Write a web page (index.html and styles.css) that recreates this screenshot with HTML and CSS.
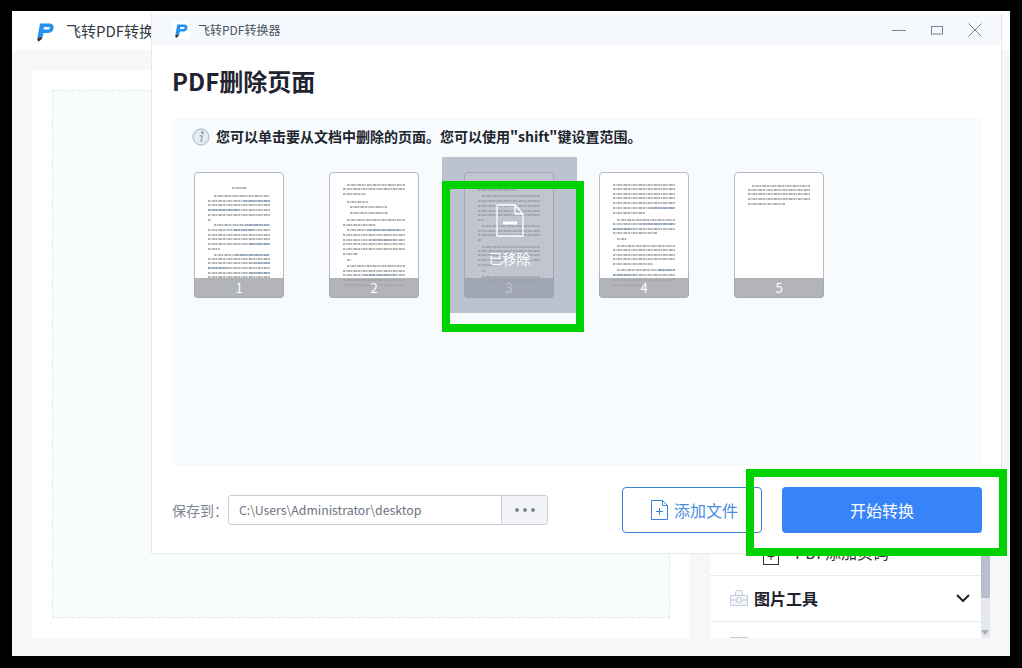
FILE: index.html
```html
<!DOCTYPE html>
<html lang="zh-CN">
<head>
<meta charset="utf-8">
<title>飞转PDF转换器</title>
<link rel="stylesheet" href="styles.css">
</head>
<body>
<svg class="defs" width="0" height="0" aria-hidden="true">
  <symbol id="logo" viewBox="0 0 24 24">
    <rect width="24" height="24" rx="2" fill="#fff"/>
    <path d="M7 4.500H16.500C20 4.500 21 7 20.500 9.500C20 12.500 17.500 14 14.500 14H10.500L9.500 18L4.500 18.500Z" fill="#2492f0"/>
    <path d="M11 8H15.500C16.500 8 17 8.600 16.800 9.300C16.600 10.200 15.900 10.500 15 10.500H10.400Z" fill="#fff"/>
    <path d="M4.500 18.500L9.500 18L8.800 20L5.500 22.800L4.500 21Z" fill="#33383f"/>
  </symbol>
</svg>

<section class="window app">
  <header class="app-bar">
    <svg class="app-logo"><use href="#logo"/></svg>
    <span class="app-name">飞转PDF转换器</span>
  </header>
  <div class="app-main">
    <div class="drop-panel"><div class="drop-zone"></div></div>
    <aside class="tools">
      <div class="tools-list">
        <div class="tools-spacer"></div>
        <div class="tool-row sub">
          <svg class="sub-icon" viewBox="0 0 24 20"><rect x="0" y="1" width="9" height="8" fill="#e39a3c"/><rect x="8.500" y="1.500" width="15" height="17" fill="#fff" stroke="#333"/><path d="M16 7v7M12.500 10.500h7" stroke="#333"/></svg>
          <span>PDF添加页码</span>
        </div>
        <div class="tool-row group">
          <svg class="group-icon" viewBox="0 0 18 16"><path d="M.5 5.500h17v10H.5zM.5 10h17M5.500 5.500V2.500a2 2 0 0 1 2-2h3a2 2 0 0 1 2 2v3" fill="#f1f5f9" stroke="#c2ccd8"/><rect x="7" y="8" width="4" height="4" fill="#fff" stroke="#c2ccd8"/></svg>
          <b class="group-name">图片工具</b>
          <svg class="chevron" viewBox="0 0 14 8"><path d="M1 1l6 6 6-6" fill="none" stroke="#222" stroke-width="2"/></svg>
        </div>
        <div class="tool-row group last">
          <svg class="group-icon" viewBox="0 0 18 16"><path d="M.5 1.500h17v14H.5z" fill="#f1f5f9" stroke="#c2ccd8"/></svg>
          <b class="group-name">文档翻译</b>
        </div>
      </div>
      <div class="scrollbar"><div class="scroll-thumb"></div><div class="scroll-arrow"></div></div>
    </aside>
  </div>
</section>

<section class="window modal">
  <header class="modal-bar">
    <div class="modal-brand">
      <svg class="modal-logo"><use href="#logo"/></svg>
      <span class="modal-name">飞转PDF转换器</span>
    </div>
    <div class="win-controls">
      <svg class="win-icon" viewBox="0 0 14 14"><path d="M0 7.500h14" stroke="#7d8594"/></svg>
      <svg class="win-icon" viewBox="0 0 14 14"><rect x="1.500" y="3.500" width="11" height="7.500" fill="none" stroke="#7d8594"/></svg>
      <svg class="win-icon" viewBox="0 0 14 14"><path d="M.5.500l13 13M13.500.500l-13 13" stroke="#7d8594"/></svg>
    </div>
  </header>
  <div class="modal-body">
    <h1 class="modal-title">PDF删除页面</h1>
    <div class="pages-panel">
      <p class="hint">
        <svg class="hint-icon" viewBox="0 0 18 18"><circle cx="9" cy="9" r="8" fill="#e4ebf3" stroke="#b8c5d6" stroke-width="1.300"/><path d="M9.800 3.800h1.200v1.600H9.800zM7.500 7.800h2.800L9 13.200h1.300" fill="none" stroke="#8d9fb6" stroke-width="1.200"/></svg>
        您可以单击要从文档中删除的页面。您可以使用"shift"键设置范围。
      </p>
      <div class="thumbs">
        <figure class="thumb">
          <svg class="page" viewBox="0 0 90 126">
            <path class="ink" d="M38 16h15M20 24h56M14 29h62M14 33h62M14 38h62M14 43h62M14 48h3M20 53h56M14 58h62M14 63h62M14 67h62M14 72h62M14 77h12M20 83h56M14 87h62M14 91h62M14 96h62M14 101h62M14 105h62"/>
            <path class="link" d="M50 29h26M52 53h24M40 58h20M14 38h30M56 72h20M42 83h34M60 91h16M14 96h20M56 101h20"/>
          </svg>
          <figcaption class="page-no">1</figcaption>
        </figure>
        <figure class="thumb">
          <svg class="page" viewBox="0 0 90 126">
            <path class="ink" d="M18 13h58M14 17h62M14 22h23M18 30h21M21 35h37M21 41h38M18 48h58M14 53h33M18 58h58M14 63h62M14 68h62M14 72h62M14 77h62M14 82h15M18 88h4M18 94h58M14 99h62M14 103h62M14 108h62M14 113h62"/>
            <path class="link" d="M40 58h30M44 68h22M36 103h30M14 108h40"/>
          </svg>
          <figcaption class="page-no">2</figcaption>
        </figure>
        <figure class="thumb removed">
          <svg class="page" viewBox="0 0 90 126">
            <path class="ink" d="M14 18h37M18 24h58M14 29h62M14 34h62M14 39h62M14 43h62M14 48h6M18 54h58M14 59h62M14 63h62M14 68h4M18 75h58M14 79h62M14 83h62M14 88h62M14 93h16M18 99h4M18 105h58M14 109h62"/>
          </svg>
          <figcaption class="page-no">3</figcaption>
          <div class="removed-mask">
            <svg class="removed-icon" viewBox="0 0 28 33"><path d="M1 1H19L27 10V32H1ZM19 1V10H27" fill="none" stroke="#fff" stroke-width="1.300"/><path d="M7 19H21" stroke="#fff" stroke-width="3"/></svg>
            <span class="removed-label">已移除</span>
          </div>
        </figure>
        <figure class="thumb">
          <svg class="page" viewBox="0 0 90 126">
            <path class="ink" d="M14 13h62M14 17h62M14 22h62M14 26h62M14 31h62M14 36h62M14 41h32M18 48h58M14 52h62M14 57h62M14 61h44M18 67h10M18 74h58M14 78h62M14 83h62M14 87h62M14 92h40M18 98h58M14 103h62M14 108h62M14 113h30"/>
            <path class="link" d="M52 36h24M44 52h30M14 57h20M14 103h22M60 98h16"/>
          </svg>
          <figcaption class="page-no">4</figcaption>
        </figure>
        <figure class="thumb">
          <svg class="page" viewBox="0 0 90 126">
            <path class="ink" d="M18 14h58M14 18h62M14 22h62M14 27h62M14 32h37"/>
          </svg>
          <figcaption class="page-no">5</figcaption>
        </figure>
      </div>
    </div>
    <footer class="modal-foot">
      <label class="save-label">保存到：</label>
      <div class="path-field">
        <span class="path-text">C:\Users\Administrator\desktop</span>
        <span class="path-more"><i></i><i></i><i></i></span>
      </div>
      <div class="foot-spacer"></div>
      <button class="btn-add">
        <svg class="add-icon" viewBox="0 0 17 20"><path d="M.5.500H11.500L16.500 5.500V19.500H.5ZM11.500.500V5.500H16.500M5 11.500h7M8.500 8v7" fill="none" stroke="#3b82d6"/></svg>
        添加文件
      </button>
      <button class="btn-start">开始转换</button>
    </footer>
  </div>
</section>

<div class="mark mark-page"></div>
<div class="mark mark-start"></div>
</body>
</html>
```
FILE: styles.css
```css
* { box-sizing: border-box; }
html, body { height: 100%; }
body {
  margin: 0;
  background: #000;
  overflow: hidden;
  font-family: "Noto Sans CJK SC", "Noto Sans", sans-serif;
  color: #1f2430;
}
.defs { position: absolute; }
.window { position: absolute; }

/* background application window */
.app {
  left: 12px; top: 11px; width: 998px; height: 645px;
  background: #f5f7f9;
  display: flex; flex-direction: column;
}
.app-bar {
  height: 39px; background: #fff;
  display: flex; align-items: center;
  padding-left: 21px;
}
.app-logo { width: 24px; height: 24px; margin-right: 9px; }
.app-name { font-size: 15px; color: #333a46; white-space: nowrap; }
.app-main {
  flex: 1; min-height: 0;
  display: flex; gap: 20px;
  padding: 20px 20px 18px;
}
.drop-panel { width: 658px; background: #fff; padding: 20px; }
.drop-zone {
  height: 100%;
  background: #f8fcfd;
  border: 1px dashed #dbeaec;
}
.tools { flex: 1; display: flex; min-width: 0; }
.tools-list { flex: 1; min-width: 0; background: #fff; display: flex; flex-direction: column; overflow: hidden; }
.tools-spacer { flex: 1; }
.tool-row { display: flex; align-items: center; border-bottom: 1px solid #e8ebef; flex: none; }
.sub { height: 46px; padding: 0 0 2px 45px; font-size: 16px; color: #333; }
.sub-icon { width: 24px; height: 20px; margin: 8px 16px 0 0; }
.group { height: 46px; padding: 0 11px 2px 20px; }
.group-icon { width: 18px; height: 16px; margin-right: 6px; flex: none; }
.group-name { font-size: 16px; line-height: 20px; font-weight: 700; color: #1f2430; flex: 1; }
.chevron { width: 14px; height: 8px; }
.last { height: 16px; border: 0; align-items: flex-start; padding: 14px 0 0 20px; overflow: hidden; }
.scrollbar { width: 9px; background: #e6e8f0; position: relative; display: flex; flex-direction: column; }
.scroll-thumb { flex: 1; background: #b8bfca; margin-bottom: 40px; }
.scroll-arrow {
  position: absolute; left: 0; bottom: 3px;
  border-left: 4.500px solid transparent;
  border-right: 4.500px solid transparent;
  border-top: 5px solid #a9afba;
}

/* modal window */
.modal {
  left: 151px; top: 14px; width: 851px; height: 540px;
  background: #fff;
  border: 1px solid #e6e9ee;
  border-top: 0;
  display: flex; flex-direction: column;
}
.modal-bar {
  height: 31px; flex: none;
  background: #f5f9fd;
  display: flex; align-items: center; justify-content: space-between;
  padding: 0 19px 0 20px;
}
.modal-brand { display: flex; align-items: center; }
.modal-logo { width: 18px; height: 18px; margin-right: 8px; }
.modal-name { font-size: 12px; color: #4a5260; }
.win-controls { display: flex; gap: 24px; align-items: center; }
.win-icon { width: 14px; height: 14px; }
.modal-body { flex: 1; min-height: 0; padding: 0 20px; display: flex; flex-direction: column; }
.modal-title {
  margin: 0; height: 73px;
  font-size: 24px; line-height: 71px; font-weight: 700;
  color: #1f2430;
}
.pages-panel { height: 348px; flex: none; background: #f7fbfd; padding: 0 22px; }
.hint {
  margin: 0; height: 54px; padding: 8px 0 0;
  display: flex; align-items: flex-start;
  font-size: 14px; line-height: 20px; font-weight: 700;
  color: #20242c;
  white-space: nowrap;
}
.hint-icon { width: 18px; height: 18px; margin: 2px 6px 0 -2px; flex: none; }
.thumbs { display: flex; gap: 45px; }
.thumb {
  margin: 0; width: 90px; height: 126px;
  position: relative;
  background: #fff;
  border: 1px solid #b7bac0;
  border-radius: 4px;
}
.page { position: absolute; left: -1px; top: -1px; width: 90px; height: 126px; }
.ink { fill: none; stroke: #26282e; stroke-width: 1; stroke-dasharray: 2 .6 1 .8 3 .5 1.500 1 4 .7; opacity: .72; }
.link { fill: none; stroke: #2a72c4; stroke-width: 1; stroke-dasharray: 3 .8 2 1; opacity: .55; }
.page-no {
  position: absolute; left: -1px; right: -1px; bottom: -1px; height: 20px;
  background: rgba(165, 167, 170, .85);
  border-radius: 0 0 4px 4px;
  color: #fff; font-size: 13px; line-height: 20px; text-align: center;
}
.removed-mask {
  position: absolute; left: -23px; top: -16px; width: 135px; height: 156px;
  background: rgba(150, 158, 175, .6);
  display: flex; flex-direction: column; align-items: center;
  color: #fff;
}
.removed-icon { width: 28px; height: 33px; margin-top: 47px; }
.removed-label { font-size: 14px; line-height: 20px; margin-top: 11px; }

/* footer */
.modal-foot { flex: 1; display: flex; align-items: center; }
.save-label { font-size: 14px; color: #7c8494; width: 56px; flex: none; }
.path-field {
  width: 320px; height: 30px;
  border: 1px solid #c9ced8; border-radius: 3px;
  display: flex; overflow: hidden;
}
.path-text { flex: 1; padding-left: 10px; font-size: 12.300px; line-height: 28px; color: #6d7482; }
.path-more {
  width: 46px; background: #f2f4f8; border-left: 1px solid #c9ced8;
  display: flex; align-items: center; justify-content: center; gap: 4px;
}
.path-more i { width: 4px; height: 4px; border-radius: 50%; background: #7c8494; }
.foot-spacer { flex: 1; }
.btn-add, .btn-start {
  height: 46px; border-radius: 4px;
  font-family: inherit; font-size: 16px;
  display: flex; align-items: center; justify-content: center;
  padding: 0; cursor: pointer;
}
.btn-add { width: 140px; background: #fff; border: 1px solid #3b82d6; color: #4a8fe0; gap: 6px; margin-right: 20px; padding-left: 5px; }
.add-icon { width: 17px; height: 20px; }
.btn-start { width: 200px; background: #3784f8; border: 0; color: #fff; margin-right: -1px; }

/* green annotation boxes */
.mark { position: absolute; border: 8px solid #00d200; }
.mark-page { left: 442px; top: 181px; width: 142px; height: 151px; }
.mark-start { left: 746px; top: 469px; width: 261px; height: 87px; }
```
